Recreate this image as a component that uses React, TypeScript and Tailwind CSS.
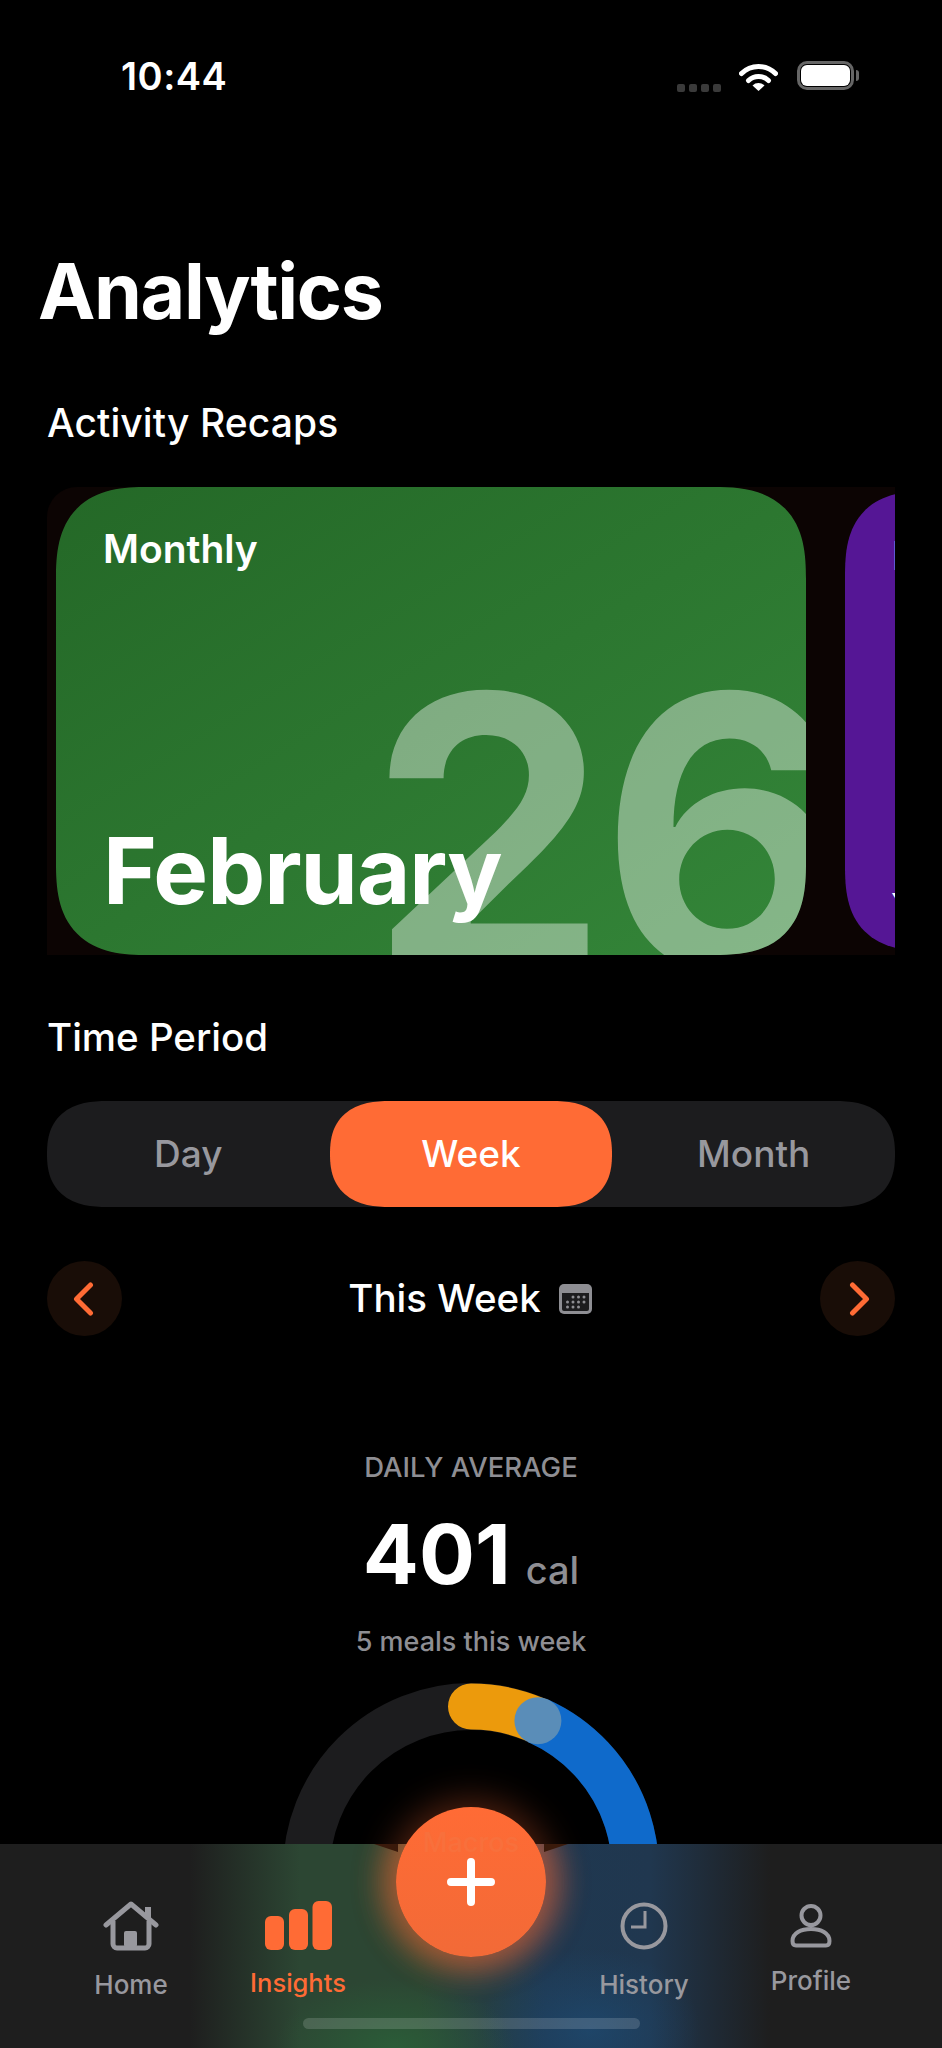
import React from "react";

const polar = (deg: number, r = 164.5, c = 188) => {
  const a = (deg * Math.PI) / 180;
  return [c + r * Math.sin(a), c - r * Math.cos(a)];
};
const arc = (from: number, to: number) => {
  const [x1, y1] = polar(from);
  const [x2, y2] = polar(to);
  return `M${x1} ${y1} A164.5 164.5 0 0 1 ${x2} ${y2}`;
};

function Ring() {
  const [dx, dy] = polar(24);
  return (
    <svg width="376" height="376" viewBox="0 0 376 376" fill="none">
      <circle cx="188" cy="188" r="164.5" stroke="#1c1c1e" strokeWidth="47" />
      <path d={arc(24, 120)} stroke="#0f6acb" strokeWidth="47" />
      <path d={arc(0, 23)} stroke="#ec9a0c" strokeWidth="46" strokeLinecap="round" />
      <circle cx={dx} cy={dy} r="23.5" fill="#5a8db8" />
    </svg>
  );
}

function StatusIcons() {
  return (
    <div className="flex items-end">
      <div className="flex gap-[4px] mb-[-1px]">
        {[0, 1, 2, 3].map((i) => (
          <div key={i} className="w-[8px] h-[8px] rounded-[2px] bg-[#3a3a3a]" />
        ))}
      </div>
      <svg className="ml-[18px]" width="39" height="29" viewBox="0 0 39 29" fill="none">
        <path d="M2.5 11.5A24 24 0 0 1 36.5 11.5" stroke="#fff" strokeWidth="5" strokeLinecap="round" />
        <path d="M9.5 18.5A14.5 14.5 0 0 1 29.5 18.5" stroke="#fff" strokeWidth="5" strokeLinecap="round" />
        <path d="M13.5 23.5A8.5 8.5 0 0 1 25.5 23.5L19.5 29Z" fill="#fff" />
      </svg>
      <div className="ml-[19px] w-[57px] h-[29px] rounded-[10px] border-[3px] border-[#666] p-[1px] mb-[1px]">
        <div className="w-full h-full rounded-[6px] bg-white" />
      </div>
      <div className="ml-[2px] w-[3px] h-[11px] rounded-r-[3px] bg-[#666] mb-[10px]" />
    </div>
  );
}

function Chevron({ dir }: { dir: "left" | "right" }) {
  return (
    <div className="w-[75px] h-[75px] rounded-full bg-[#190d07] flex items-center justify-center">
      <svg width="24" height="36" viewBox="0 0 24 36" fill="none">
        <path
          d={dir === "left" ? "M17.5 4L3.5 18L17.5 32" : "M6.5 4L20.5 18L6.5 32"}
          stroke="#ff6b35"
          strokeWidth="5"
          strokeLinecap="round"
          strokeLinejoin="round"
        />
      </svg>
    </div>
  );
}

function CalendarIcon() {
  return (
    <svg width="33" height="30" viewBox="0 0 33 30" fill="none">
      <rect width="33" height="30" rx="5" fill="#8e8e93" />
      <path d="M3 9H30V25A2 2 0 0 1 28 27H5A2 2 0 0 1 3 25Z" fill="#1c1c1e" />
      {[
        [14, 13], [19.5, 13], [25, 13],
        [8.5, 18], [14, 18], [19.5, 18], [25, 18],
        [8.5, 23], [14, 23], [19.5, 23],
      ].map(([x, y], i) => (
        <circle key={i} cx={x} cy={y} r="1.5" fill="#8e8e93" />
      ))}
    </svg>
  );
}

function HomeIcon() {
  return (
    <svg width="56" height="50" viewBox="0 0 56 50" fill="none">
      <path d="M3 24L28 3L53 24" stroke="#98989e" strokeWidth="5" strokeLinecap="round" strokeLinejoin="round" />
      <path d="M45 6V17" stroke="#98989e" strokeWidth="6" />
      <path d="M10 20V43A4 4 0 0 0 14 47H42A4 4 0 0 0 46 43V20" stroke="#98989e" strokeWidth="5" />
      <rect x="21" y="30" width="13" height="16" rx="2" fill="#98989e" />
    </svg>
  );
}

function BarsIcon() {
  return (
    <svg width="67" height="50" viewBox="0 0 67 50" fill="#ff6b35">
      <rect x="0" y="15" width="19" height="34" rx="6" />
      <rect x="24" y="8" width="19" height="41" rx="6" />
      <rect x="47.5" y="0" width="19.5" height="49" rx="6" />
    </svg>
  );
}

function ClockIcon() {
  return (
    <svg width="48" height="48" viewBox="0 0 48 48" fill="none">
      <circle cx="24" cy="24" r="21.5" stroke="#98989e" strokeWidth="4" />
      <path d="M25 9V25H11" stroke="#98989e" strokeWidth="3" />
    </svg>
  );
}

function ProfileIcon() {
  return (
    <svg width="42" height="44" viewBox="0 0 42 44" fill="none">
      <circle cx="21" cy="11.5" r="9.5" stroke="#98989e" strokeWidth="4" />
      <path d="M2.5 37C2.5 29 11 25 21 25C31 25 39.5 29 39.5 37C39.5 40 38 41.5 36 41.5H6C4 41.5 2.5 40 2.5 37Z" stroke="#98989e" strokeWidth="4" />
    </svg>
  );
}

export default function App() {
  return (
    <div className="relative w-[942px] h-[2048px] overflow-hidden bg-black text-white font-['Inter',sans-serif]">
      {/* status bar */}
      <div className="h-[120px] pt-[57px] pl-[121px] pr-[83px] flex justify-between items-start">
        <div className="text-[38px] leading-[38px] font-semibold tracking-[0.5px]">10:44</div>
        <div className="pt-[4px]">
          <StatusIcons />
        </div>
      </div>

      <h1 className="mt-[131px] ml-[38px] text-[77px] leading-[80px] font-bold tracking-[-1.4px]">Analytics</h1>
      <h2 className="mt-[68px] ml-[47px] text-[39px] leading-[48px] font-medium tracking-[0.1px]">Activity Recaps</h2>

      {/* carousel */}
      <div className="mt-[40px] mx-[47px] h-[468px] bg-[#0c0403] rounded-tl-[30px] overflow-hidden flex items-center pl-[9px] gap-[39px]">
        <div className="relative shrink-0 w-[750px] h-[468px] rounded-[92px] [corner-shape:superellipse(1.4)] overflow-hidden bg-gradient-to-br from-[#246827] to-[#348639]">
          <div className="absolute left-[313px] top-[155px] text-[380px] leading-[380px] font-bold text-white/40 tracking-[-8px] whitespace-nowrap">26</div>
          <div className="relative h-full flex flex-col justify-between pt-[38px] pl-[47px] pb-[34px]">
            <div className="text-[39px] leading-[48px] font-semibold">Monthly</div>
            <div className="text-[92px] leading-[100px] font-bold tracking-[-1px]">February</div>
          </div>
        </div>
        <div className="relative shrink-0 w-[700px] h-[460px] rounded-[85px] [corner-shape:superellipse(1.4)] overflow-hidden bg-[#551695]">
          <div className="absolute left-[47px] top-[41px] text-[39px] leading-[48px] font-semibold">Monthly</div>
          <div className="absolute left-[46px] top-[393px] text-[40px] leading-[48px] font-semibold">Year</div>
        </div>
      </div>

      <h2 className="mt-[58px] ml-[47px] text-[38.5px] leading-[48px] font-medium">Time Period</h2>

      {/* segmented */}
      <div className="mt-[40px] mx-[47px] h-[106px] rounded-[60px/53px] [corner-shape:superellipse(1.3)] bg-[#1c1c1e] grid grid-cols-3 items-stretch text-[37px] font-medium text-[#98989e]">
        <div className="flex items-center justify-center">Day</div>
        <div className="flex items-center justify-center rounded-[60px/53px] [corner-shape:superellipse(1.3)] bg-[#ff6b35] text-white">Week</div>
        <div className="flex items-center justify-center">Month</div>
      </div>

      {/* period nav */}
      <div className="mt-[54px] mx-[47px] h-[75px] flex items-center justify-between">
        <Chevron dir="left" />
        <div className="flex items-center gap-[18px] mr-[2px]">
          <span className="text-[38.5px] font-medium">This Week</span>
          <CalendarIcon />
        </div>
        <Chevron dir="right" />
      </div>

      {/* summary */}
      <div className="mt-[113px] flex flex-col items-center">
        <div className="text-[27.5px] leading-[36px] font-medium text-[#8e8e93]">DAILY AVERAGE</div>
        <div className="mt-[27px] h-[80px] flex items-baseline gap-[15px] leading-[84px]">
          <span className="text-[83px] font-bold">401</span>
          <span className="text-[38px] font-medium text-[#8e8e93]">cal</span>
        </div>
        <div className="mt-[32px] text-[27px] leading-[36px] font-medium text-[#8e8e93]">5 meals this week</div>
        <div className="mt-[23px]">
          <Ring />
        </div>
      </div>

      {/* bottom nav */}
      <div className="absolute left-0 bottom-0 w-full h-[204px] overflow-hidden bg-[radial-gradient(120px_70px_at_395px_204px,rgba(42,100,58,0.75),rgba(42,100,58,0)),radial-gradient(110px_80px_at_590px_185px,rgba(30,75,115,0.7),rgba(30,75,115,0)),linear-gradient(to_right,#1e1e1e_190px,#2c4633_300px,#2c4633_420px,#27403f_471px,#1f3850_545px,#20374f_650px,#1e1e1e_770px)]">
        <div className="absolute left-[396px] top-[-37px] w-[150px] h-[150px] rounded-full shadow-[0_0_30px_14px_rgba(255,107,53,0.42)]" />
        <div className="relative px-[47.5px] flex">
          <div className="w-[167px] pt-[57px] flex flex-col items-center">
            <HomeIcon />
            <span className="mt-[18px] text-[26px] leading-[32px] font-medium text-[#98989e]">Home</span>
          </div>
          <div className="w-[167px] pt-[57px] flex flex-col items-center">
            <BarsIcon />
            <span className="mt-[16px] text-[25.5px] leading-[32px] font-medium text-[#ff6b35]">Insights</span>
          </div>
          <div className="w-[179px]" />
          <div className="w-[167px] pt-[58px] flex flex-col items-center">
            <ClockIcon />
            <span className="mt-[19px] text-[26px] leading-[32px] font-medium text-[#98989e]">History</span>
          </div>
          <div className="w-[167px] pt-[60px] flex flex-col items-center">
            <ProfileIcon />
            <span className="mt-[17px] text-[26px] leading-[32px] font-medium text-[#98989e]">Profile</span>
          </div>
        </div>
      </div>

      {/* FAB */}
      <div className="absolute left-[396px] top-[1807px] w-[150px] h-[150px] rounded-full bg-gradient-to-b from-[#ff6b35] to-[#f26a37] shadow-[0_0_34px_8px_rgba(255,107,53,0.3)] flex items-center justify-center">
        <svg className="absolute left-[-22px] top-[37px] overflow-visible" width="194" height="9" viewBox="0 0 194 9" fill="#3a1a0b">
          <path d="M0 0L24 8V0Z" />
          <path d="M194 0L170 8V0Z" />
        </svg>
        <div className="absolute top-[18px] w-full text-center text-[27px] leading-[36px] font-medium text-[#f8703c]">Macros</div>
        <svg width="48" height="48" viewBox="0 0 48 48" fill="none">
          <path d="M24 4V44M4 24H44" stroke="#fff" strokeWidth="8" strokeLinecap="round" />
        </svg>
      </div>

      {/* home indicator */}
      <div className="absolute left-[303px] bottom-[19px] w-[337px] h-[11px] rounded-full bg-white/15" />
    </div>
  );
}
